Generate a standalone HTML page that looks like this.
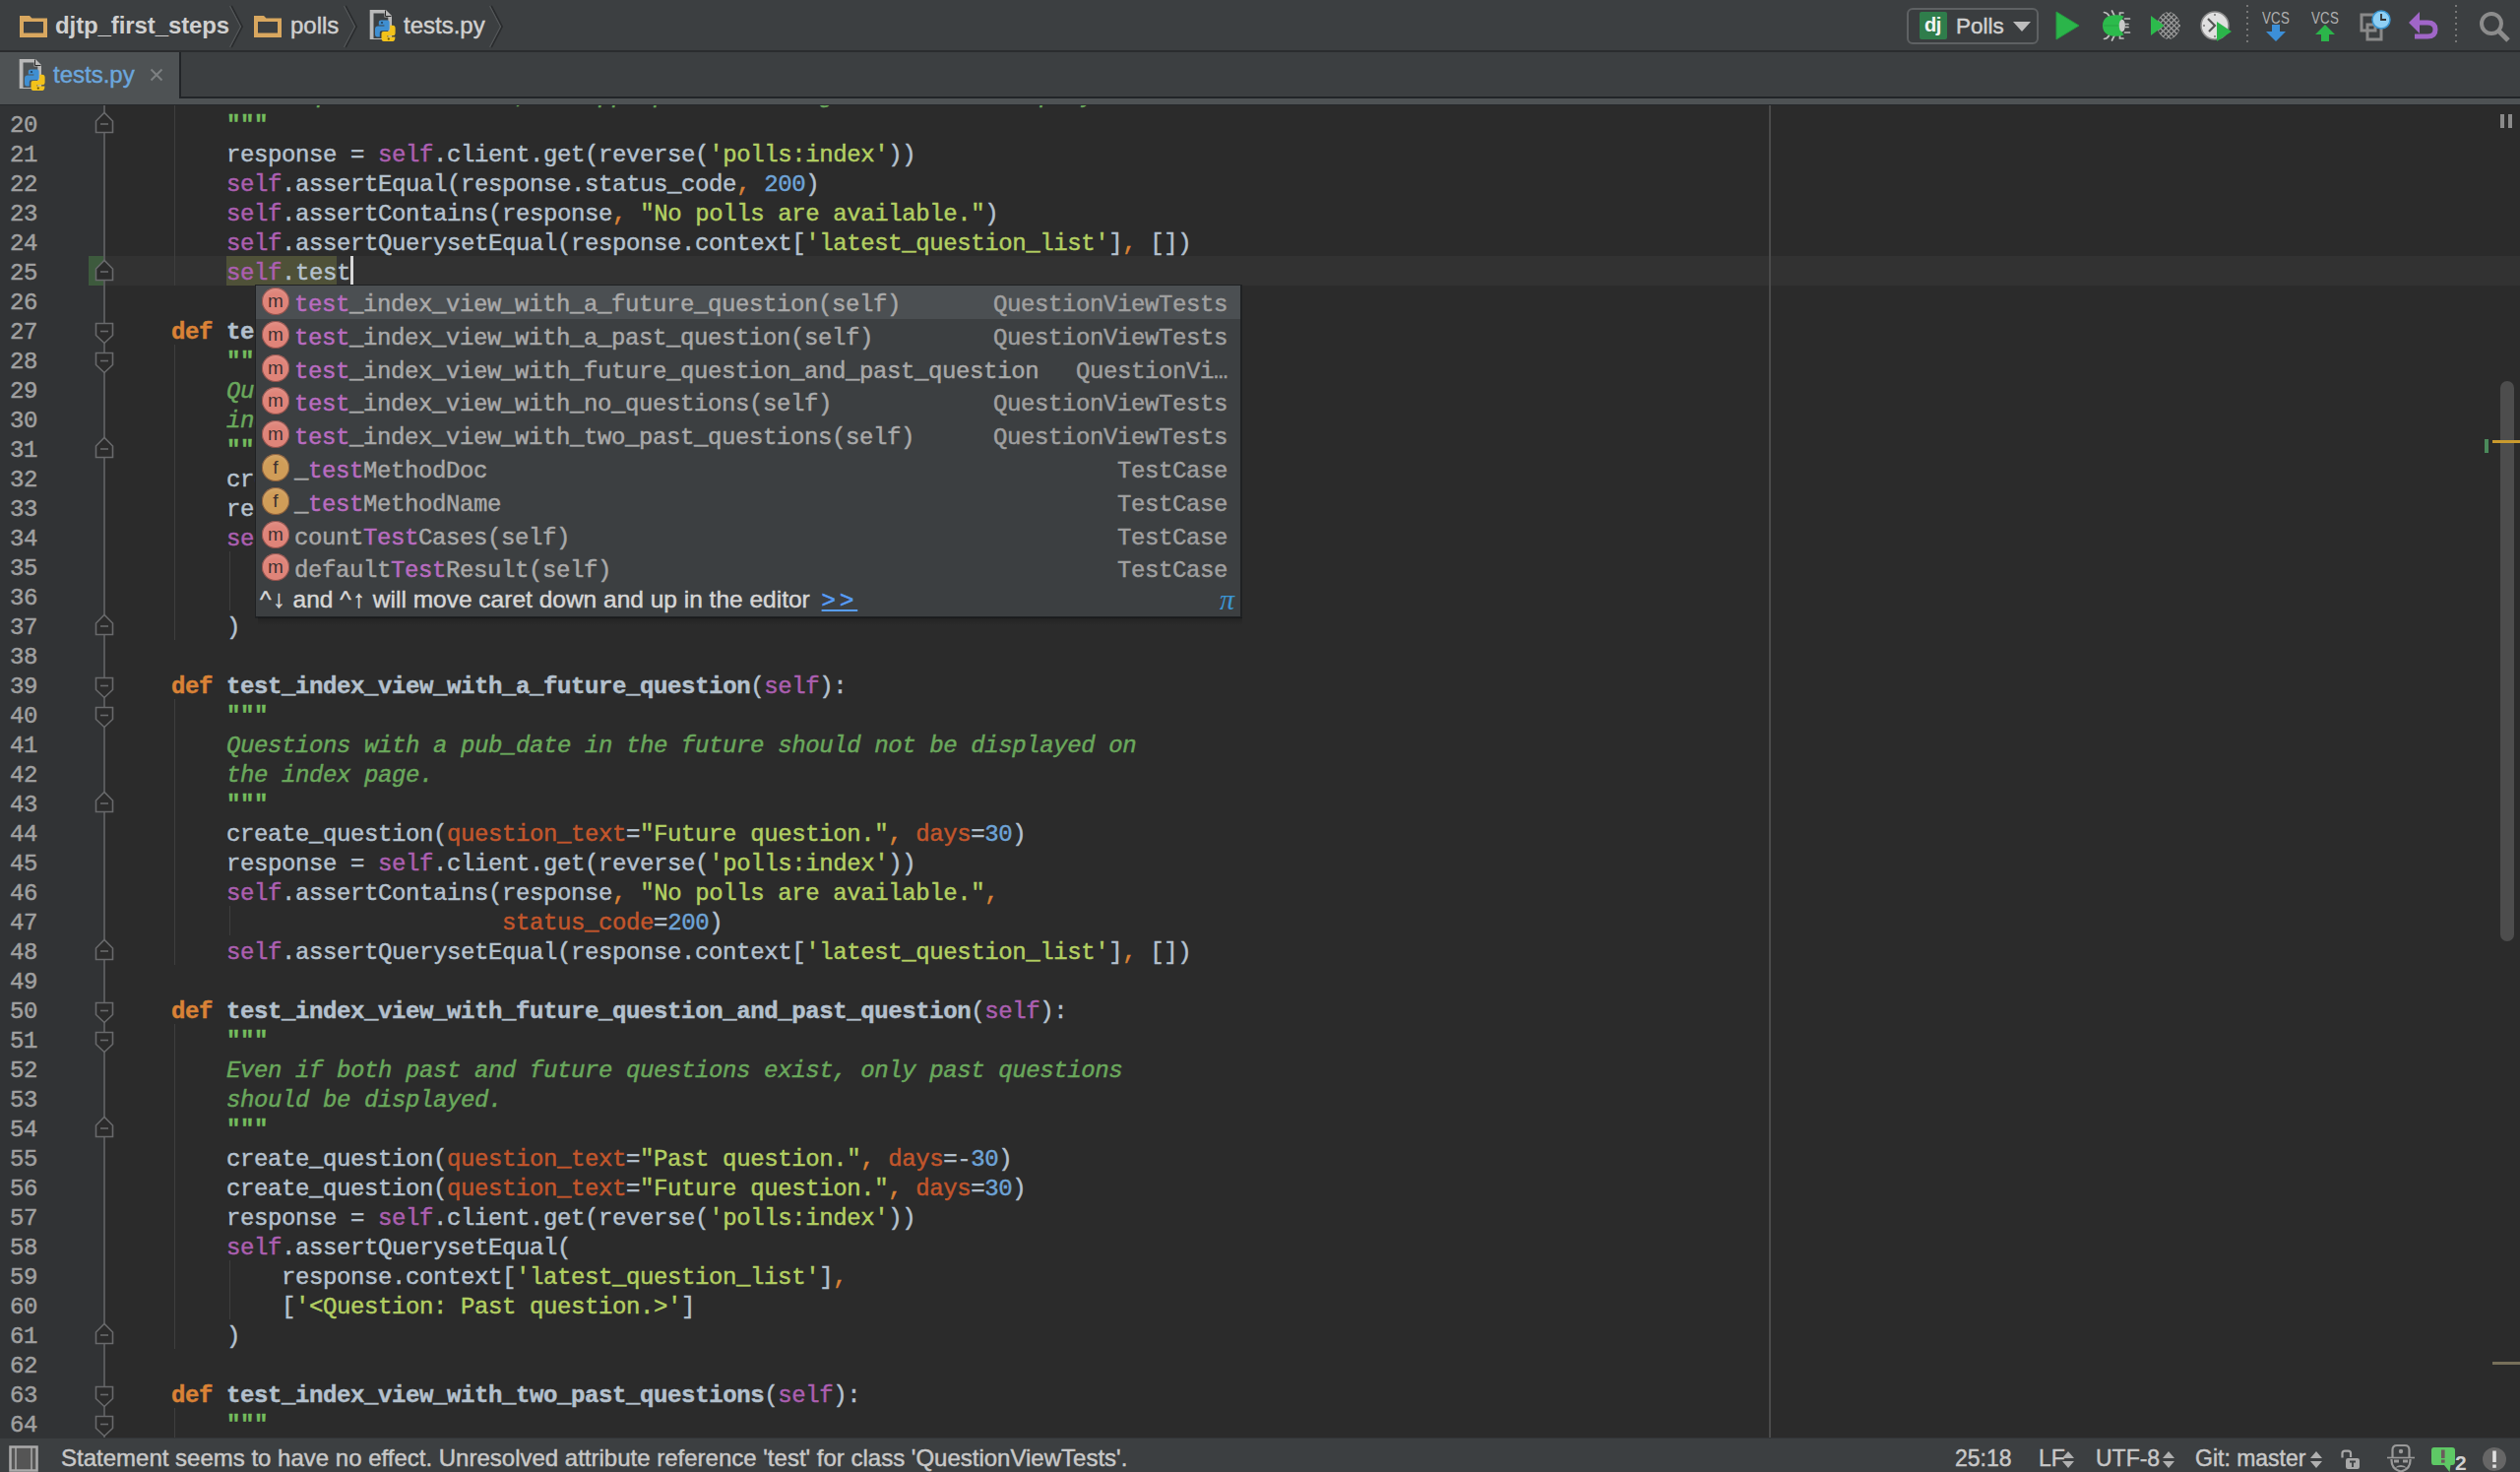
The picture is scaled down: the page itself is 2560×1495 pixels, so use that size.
<!DOCTYPE html><html><head><meta charset="utf-8"><style>
*{margin:0;padding:0;box-sizing:border-box}
html,body{width:2560px;height:1495px;overflow:hidden;background:#2b2b2b}
body{position:relative;font-family:"Liberation Sans",sans-serif}
.abs{position:absolute}
.mono{font-family:"Liberation Mono",monospace;font-size:24px;letter-spacing:-0.4px;white-space:pre}
.ln{position:absolute;left:0;height:30px;line-height:30px;padding-top:3px}
.d{color:#b5c2cf}.k{color:#d98236;font-weight:bold}.s{color:#ab5fb0}.t{color:#b3cf62}
.o{color:#6aa85c;font-style:italic}.q{color:#74bd5e;font-weight:bold}.n{color:#6ea3d6}.a{color:#c2562b}.c{color:#d98236}
.f{color:#b3c0cd;font-weight:bold}
.num{position:absolute;left:0;width:38px;text-align:right;height:30px;line-height:30px;padding-top:3px;color:#a0a0a0}
.st{-webkit-text-stroke:0.45px currentColor}
.ui{font-family:"Liberation Sans",sans-serif;white-space:pre;position:absolute}
.prow{position:absolute;left:0;width:1000px;height:34px}
.ptxt{position:absolute;left:39px;top:0;line-height:34px;padding-top:3px;color:#a9a9a9}
.ptype{position:absolute;right:13px;top:0;line-height:34px;padding-top:3px;color:#a0a0a0}
.pm{color:#b86cc0}
.pic{position:absolute;left:6px;top:2px;width:28px;height:28px;border-radius:14px;font-family:"Liberation Sans",sans-serif;font-size:19px;line-height:28px;text-align:center;color:#3d3030;box-shadow:inset 0 0 0 1px rgba(60,20,20,0.45),inset 0 3px 4px rgba(255,255,255,0.12)}
</style></head><body><div class="abs" style="left:0;top:0;width:2560px;height:51px;background:#3c3f41"></div><div class="abs" style="left:0;top:51px;width:2560px;height:2px;background:#2a2c2e"></div><svg class="abs" style="left:19px;top:13px" width="30" height="26" viewBox="0 0 30 26"><path d="M1 3 H11 L13.5 5.5 H29 V25 H1 Z" fill="#d8a75f"/><rect x="5" y="9" width="20" height="11.5" fill="#3c3f41"/></svg><div class="ui" style="left:56px;top:9px;font-size:24px;line-height:34px;color:#d0d0d0;font-weight:bold;letter-spacing:-0.1px">djtp_first_steps</div><svg class="abs" style="left:233px;top:5px" width="16" height="44" viewBox="0 0 16 44"><path d="M2 1 L13 22 L2 43" fill="none" stroke="#2a2c2e" stroke-width="2"/><path d="M0.5 1 L11.5 22 L0.5 43" fill="none" stroke="#55585a" stroke-width="1.2"/></svg><svg class="abs" style="left:257px;top:13px" width="30" height="26" viewBox="0 0 30 26"><path d="M1 3 H11 L13.5 5.5 H29 V25 H1 Z" fill="#d8a75f"/><rect x="5" y="9" width="20" height="11.5" fill="#3c3f41"/></svg><div class="ui st" style="left:295px;top:9px;font-size:24px;line-height:34px;color:#d0d0d0">polls</div><svg class="abs" style="left:349px;top:5px" width="16" height="44" viewBox="0 0 16 44"><path d="M2 1 L13 22 L2 43" fill="none" stroke="#2a2c2e" stroke-width="2"/><path d="M0.5 1 L11.5 22 L0.5 43" fill="none" stroke="#55585a" stroke-width="1.2"/></svg><svg class="abs" style="left:375px;top:9px" width="28" height="34" viewBox="0 0 28 34"><path d="M0.7 0.9 H17 L23 6.9 V31 H0.7 Z" fill="#b9b9b9"/><path d="M4.5 4.6 H15.5 V8.5 H19.3 V30 H4.5 Z" fill="#3c3f41"/><path d="M16.5 1.5 V7.5 H22.5" fill="none" stroke="#2a2a2a" stroke-width="1"/><path d="M9.8 13.2 Q9.8 11.4 12 11.4 H18.6 Q20.6 11.4 20.6 13.5 V20 Q20.6 22.2 18.5 22.2 H12.6 Q10.8 22.2 10.8 24.2 V28.4 H8.2 Q6 28.4 6 25.5 V20.8 Q6 17.6 9 17.6 H15.4 V16.4 H9.8 Z" fill="#3f8fd2"/><circle cx="13" cy="14" r="1.1" fill="#1d3f5e"/><path d="M26.4 28.6 Q26.4 33 24 33 H14.6 Q12.5 33 12.5 30.6 V25 Q12.5 23 14.6 23 H19.2 Q21.2 23 21.2 21 V16.7 H24 Q26.6 16.7 26.6 19.6 V25 Q26.6 27.2 24 27.2 H18.5 V28.6 Z" fill="#f2c21a"/><circle cx="19.8" cy="30.6" r="1.1" fill="#6a5300"/></svg><div class="ui st" style="left:410px;top:9px;font-size:24px;line-height:34px;color:#d0d0d0">tests.py</div><svg class="abs" style="left:497px;top:5px" width="16" height="44" viewBox="0 0 16 44"><path d="M2 1 L13 22 L2 43" fill="none" stroke="#2a2c2e" stroke-width="2"/><path d="M0.5 1 L11.5 22 L0.5 43" fill="none" stroke="#55585a" stroke-width="1.2"/></svg><div class="abs" style="left:1937px;top:8px;width:134px;height:37px;border:2px solid #5e6163;border-radius:6px;background:#3a3d3f"></div><div class="abs" style="left:1950px;top:12px;width:28px;height:28px;background:#2f7d4b;border-radius:2px"></div><div class="ui" style="left:1955px;top:11px;font-size:20px;line-height:28px;color:#f4f4f4;font-weight:bold;letter-spacing:-0.5px">dj</div><div class="ui st" style="left:1987px;top:10px;font-size:22.5px;line-height:34px;color:#d0d0d0">Polls</div><svg class="abs" style="left:2045px;top:22px" width="18" height="11"><path d="M0 0 H18 L9 10 Z" fill="#bdbdbd"/></svg><svg class="abs" style="left:2088px;top:11px" width="26" height="30"><path d="M1 1 L24 15 L1 29 Z" fill="#2bb54a" stroke="#259c40" stroke-width="1"/></svg><svg class="abs" style="left:2130px;top:8px" width="40" height="36" viewBox="0 0 40 36"><g stroke="#bdbdbd" stroke-width="1.7" fill="none" stroke-linecap="round"><path d="M7.5 4.5 Q11 5 12.5 8"/><path d="M15.5 3 L18 8"/><path d="M27 5 H23.5 V8.5"/><path d="M28.5 11 H33.5"/><path d="M29.5 16.5 H32"/><path d="M29.5 19.5 H32"/><path d="M28.5 25 H33.5"/><path d="M7.5 31.5 Q11 31 12.5 28"/><path d="M15.5 33 L18 28"/><path d="M27 31 H23.5 V27.5"/></g><path d="M27.5 8.5 C20 6 6 6 6 18 C6 30 20 30 27.5 27.5 C24 23 24 13 27.5 8.5 Z" fill="#2cbb4c"/><path d="M7 18 H24" stroke="#23a040" stroke-width="0.8"/><ellipse cx="25.8" cy="18" rx="3.1" ry="6.2" fill="#c9c9c9"/></svg><svg class="abs" style="left:2182px;top:8px" width="36" height="36" viewBox="0 0 36 36"><defs><clipPath id="cvc"><path d="M21 4 C26 4 33 11 33 18 C33 25 26 32 21 32 C16 32 9 25 9 18 C9 11 16 4 21 4 Z"/></clipPath></defs><g clip-path="url(#cvc)" stroke="#9a9a9a" stroke-width="1.3"><path d="M-51.8 -10.0 L8.2 50.0"/><path d="M4.2 -10.0 L-55.8 50.0"/><path d="M-46.2 -10.0 L13.8 50.0"/><path d="M9.8 -10.0 L-50.2 50.0"/><path d="M-40.6 -10.0 L19.4 50.0"/><path d="M15.4 -10.0 L-44.6 50.0"/><path d="M-35.0 -10.0 L25.0 50.0"/><path d="M21.0 -10.0 L-39.0 50.0"/><path d="M-29.4 -10.0 L30.6 50.0"/><path d="M26.6 -10.0 L-33.4 50.0"/><path d="M-23.8 -10.0 L36.2 50.0"/><path d="M32.2 -10.0 L-27.8 50.0"/><path d="M-18.2 -10.0 L41.8 50.0"/><path d="M37.8 -10.0 L-22.2 50.0"/><path d="M-12.6 -10.0 L47.4 50.0"/><path d="M43.4 -10.0 L-16.6 50.0"/><path d="M-7.0 -10.0 L53.0 50.0"/><path d="M49.0 -10.0 L-11.0 50.0"/><path d="M-1.4 -10.0 L58.6 50.0"/><path d="M54.6 -10.0 L-5.4 50.0"/><path d="M4.2 -10.0 L64.2 50.0"/><path d="M60.2 -10.0 L0.2 50.0"/><path d="M9.8 -10.0 L69.8 50.0"/><path d="M65.8 -10.0 L5.8 50.0"/><path d="M15.4 -10.0 L75.4 50.0"/><path d="M71.4 -10.0 L11.4 50.0"/><path d="M21.0 -10.0 L81.0 50.0"/><path d="M77.0 -10.0 L17.0 50.0"/><path d="M26.6 -10.0 L86.6 50.0"/><path d="M82.6 -10.0 L22.6 50.0"/><path d="M32.2 -10.0 L92.2 50.0"/><path d="M88.2 -10.0 L28.2 50.0"/><path d="M37.8 -10.0 L97.8 50.0"/><path d="M93.8 -10.0 L33.8 50.0"/></g><path d="M3 8 L16.5 18 L3 28 Z" fill="#2cbb4c"/></svg><svg class="abs" style="left:2234px;top:10px" width="36" height="34" viewBox="0 0 36 34"><circle cx="16" cy="16" r="14" fill="#e0e0e0" stroke="#8c8c8c" stroke-width="1.5"/><path d="M9 9 L16 16 L10 22" stroke="#555" stroke-width="2.2" fill="none"/><circle cx="16" cy="5" r="1" fill="#777"/><circle cx="5" cy="16" r="1" fill="#777"/><circle cx="16" cy="27" r="1" fill="#777"/><path d="M18 12 L33 22 L18 32 Z" fill="#2bb54a"/></svg><svg class="abs" style="left:2281px;top:4px" width="4" height="40"><rect x="1" y="1" width="2" height="2" fill="#777"/><rect x="1" y="7" width="2" height="2" fill="#777"/><rect x="1" y="13" width="2" height="2" fill="#777"/><rect x="1" y="19" width="2" height="2" fill="#777"/><rect x="1" y="25" width="2" height="2" fill="#777"/><rect x="1" y="31" width="2" height="2" fill="#777"/><rect x="1" y="37" width="2" height="2" fill="#777"/></svg><svg class="abs" style="left:2493px;top:4px" width="4" height="40"><rect x="1" y="1" width="2" height="2" fill="#777"/><rect x="1" y="7" width="2" height="2" fill="#777"/><rect x="1" y="13" width="2" height="2" fill="#777"/><rect x="1" y="19" width="2" height="2" fill="#777"/><rect x="1" y="25" width="2" height="2" fill="#777"/><rect x="1" y="31" width="2" height="2" fill="#777"/><rect x="1" y="37" width="2" height="2" fill="#777"/></svg><div class="ui" style="left:2298px;top:9px;font-size:17px;line-height:20px;color:#b0b0b0;letter-spacing:0.3px;transform:scaleX(0.78);transform-origin:0 0">VCS</div><svg class="abs" style="left:2301px;top:25px" width="22" height="18"><path d="M7 0 H15 V7 H21 L11 17 L1 7 H7 Z" fill="#3c8fd8"/></svg><div class="ui" style="left:2348px;top:9px;font-size:17px;line-height:20px;color:#b0b0b0;letter-spacing:0.3px;transform:scaleX(0.78);transform-origin:0 0">VCS</div><svg class="abs" style="left:2351px;top:25px" width="22" height="18"><path d="M11 0 L21 10 H15 V17 H7 V10 H1 Z" fill="#2bb54a"/></svg><svg class="abs" style="left:2396px;top:10px" width="34" height="32" viewBox="0 0 34 32"><rect x="3" y="5" width="14" height="16" fill="none" stroke="#8a8a8a" stroke-width="3"/><rect x="9" y="15" width="14" height="15" fill="none" stroke="#8a8a8a" stroke-width="3"/><circle cx="23" cy="10" r="9" fill="#8fd0f5" stroke="#3a95d0" stroke-width="1.5"/><path d="M23 4 V10 H28" stroke="#333" stroke-width="1.8" fill="none"/></svg><svg class="abs" style="left:2446px;top:11px" width="32" height="30" viewBox="0 0 32 30"><path d="M8 12 H20 C26 12 28 15 28 19 C28 23 26 26 20 26 H7" fill="none" stroke="#a066c8" stroke-width="5"/><path d="M1 12 L12 1 V23 Z" fill="#a066c8"/></svg><svg class="abs" style="left:2518px;top:11px" width="34" height="34" viewBox="0 0 34 34"><circle cx="13" cy="13" r="10" fill="none" stroke="#8c8c8c" stroke-width="4"/><path d="M20 20 L30 30" stroke="#8c8c8c" stroke-width="5"/></svg><div class="abs" style="left:0;top:53px;width:2560px;height:45px;background:#3c3f41"></div><div class="abs" style="left:0;top:98px;width:2560px;height:2px;background:#222528"></div><div class="abs" style="left:0;top:100px;width:2560px;height:6px;background:#4e5254"></div><div class="abs" style="left:0;top:106px;width:2560px;height:1px;background:#25282b"></div><div class="abs" style="left:0;top:53px;width:182px;height:47px;background:#4e5254"></div><div class="abs" style="left:182px;top:53px;width:2px;height:46px;background:#222528"></div><svg class="abs" style="left:19px;top:59px" width="28" height="34" viewBox="0 0 28 34"><path d="M0.7 0.9 H17 L23 6.9 V31 H0.7 Z" fill="#b9b9b9"/><path d="M4.5 4.6 H15.5 V8.5 H19.3 V30 H4.5 Z" fill="#4e5254"/><path d="M16.5 1.5 V7.5 H22.5" fill="none" stroke="#2a2a2a" stroke-width="1"/><path d="M9.8 13.2 Q9.8 11.4 12 11.4 H18.6 Q20.6 11.4 20.6 13.5 V20 Q20.6 22.2 18.5 22.2 H12.6 Q10.8 22.2 10.8 24.2 V28.4 H8.2 Q6 28.4 6 25.5 V20.8 Q6 17.6 9 17.6 H15.4 V16.4 H9.8 Z" fill="#3f8fd2"/><circle cx="13" cy="14" r="1.1" fill="#1d3f5e"/><path d="M26.4 28.6 Q26.4 33 24 33 H14.6 Q12.5 33 12.5 30.6 V25 Q12.5 23 14.6 23 H19.2 Q21.2 23 21.2 21 V16.7 H24 Q26.6 16.7 26.6 19.6 V25 Q26.6 27.2 24 27.2 H18.5 V28.6 Z" fill="#f2c21a"/><circle cx="19.8" cy="30.6" r="1.1" fill="#6a5300"/></svg><div class="ui st" style="left:54px;top:59px;font-size:24px;line-height:34px;color:#6ba6dd">tests.py</div><svg class="abs" style="left:152px;top:69px" width="14" height="14"><path d="M1.5 1.5 L12.5 12.5 M12.5 1.5 L1.5 12.5" stroke="#7d8082" stroke-width="2"/></svg><div class="abs" style="left:0;top:107px;width:2560px;height:1353px;background:#2b2b2b;overflow:hidden"><div class="abs" style="left:0;top:0;width:105px;height:1353px;background:#313335"></div><div class="abs" style="left:106px;top:153px;width:2454px;height:30px;background:#323232"></div><div class="abs" style="left:90px;top:153px;width:15px;height:30px;background:#3d5a3d"></div><div class="abs" style="left:230px;top:153px;width:112px;height:30px;background:#4f5138"></div><div class="abs" style="left:1797px;top:0;width:2px;height:1353px;background:#4a4a4a"></div><div class="abs" style="left:105px;top:0;width:2px;height:1353px;background:#58595b"></div><div class="abs" style="left:177px;top:-27px;width:1px;height:210px;background:#3e3e3e"></div><div class="abs" style="left:177px;top:243px;width:1px;height:300px;background:#3e3e3e"></div><div class="abs" style="left:177px;top:603px;width:1px;height:270px;background:#3e3e3e"></div><div class="abs" style="left:177px;top:933px;width:1px;height:330px;background:#3e3e3e"></div><div class="abs" style="left:177px;top:1323px;width:1px;height:60px;background:#3e3e3e"></div><div class="abs" style="left:233px;top:453px;width:1px;height:60px;background:#3e3e3e"></div><div class="abs" style="left:233px;top:813px;width:1px;height:30px;background:#3e3e3e"></div><div class="abs" style="left:233px;top:1173px;width:1px;height:60px;background:#3e3e3e"></div><div class="num mono st" style="top:-27px">19</div><div class="ln mono st" style="left:118px;top:-27px"><span class="d">        </span><span class="o">If no questions exist, an appropriate message should be displayed.</span></div><div class="num mono st" style="top:3px">20</div><div class="ln mono st" style="left:118px;top:3px"><span class="d">        </span><span class="q">&quot;&quot;&quot;</span></div><div class="num mono st" style="top:33px">21</div><div class="ln mono st" style="left:118px;top:33px"><span class="d">        response = </span><span class="s">self</span><span class="d">.client.get(reverse(</span><span class="t">&#x27;polls:index&#x27;</span><span class="d">))</span></div><div class="num mono st" style="top:63px">22</div><div class="ln mono st" style="left:118px;top:63px"><span class="d">        </span><span class="s">self</span><span class="d">.assertEqual(response.status_code</span><span class="c">, </span><span class="n">200</span><span class="d">)</span></div><div class="num mono st" style="top:93px">23</div><div class="ln mono st" style="left:118px;top:93px"><span class="d">        </span><span class="s">self</span><span class="d">.assertContains(response</span><span class="c">, </span><span class="t">&quot;No polls are available.&quot;</span><span class="d">)</span></div><div class="num mono st" style="top:123px">24</div><div class="ln mono st" style="left:118px;top:123px"><span class="d">        </span><span class="s">self</span><span class="d">.assertQuerysetEqual(response.context[</span><span class="t">&#x27;latest_question_list&#x27;</span><span class="d">]</span><span class="c">, </span><span class="d">[])</span></div><div class="num mono st" style="top:153px">25</div><div class="ln mono st" style="left:118px;top:153px"><span class="d">        </span><span class="s">self</span><span class="d">.test</span></div><div class="num mono st" style="top:183px">26</div><div class="ln mono st" style="left:118px;top:183px"></div><div class="num mono st" style="top:213px">27</div><div class="ln mono st" style="left:118px;top:213px"><span class="d">    </span><span class="k">def</span><span class="d"> </span><span class="f">test_index_view_with_a_past_question</span><span class="d">(</span><span class="s">self</span><span class="d">):</span></div><div class="num mono st" style="top:243px">28</div><div class="ln mono st" style="left:118px;top:243px"><span class="d">        </span><span class="q">&quot;&quot;&quot;</span></div><div class="num mono st" style="top:273px">29</div><div class="ln mono st" style="left:118px;top:273px"><span class="d">        </span><span class="o">Questions with a pub_date in the past should be displayed on the</span></div><div class="num mono st" style="top:303px">30</div><div class="ln mono st" style="left:118px;top:303px"><span class="d">        </span><span class="o">index page.</span></div><div class="num mono st" style="top:333px">31</div><div class="ln mono st" style="left:118px;top:333px"><span class="d">        </span><span class="q">&quot;&quot;&quot;</span></div><div class="num mono st" style="top:363px">32</div><div class="ln mono st" style="left:118px;top:363px"><span class="d">        create_question(</span><span class="a">question_text</span><span class="d">=</span><span class="t">&quot;Past question.&quot;</span><span class="c">, </span><span class="a">days</span><span class="d">=-</span><span class="n">30</span><span class="d">)</span></div><div class="num mono st" style="top:393px">33</div><div class="ln mono st" style="left:118px;top:393px"><span class="d">        response = </span><span class="s">self</span><span class="d">.client.get(reverse(</span><span class="t">&#x27;polls:index&#x27;</span><span class="d">))</span></div><div class="num mono st" style="top:423px">34</div><div class="ln mono st" style="left:118px;top:423px"><span class="d">        </span><span class="s">self</span><span class="d">.assertQuerysetEqual(</span></div><div class="num mono st" style="top:453px">35</div><div class="ln mono st" style="left:118px;top:453px"><span class="d">            response.context[</span><span class="t">&#x27;latest_question_list&#x27;</span><span class="d">]</span><span class="c">,</span></div><div class="num mono st" style="top:483px">36</div><div class="ln mono st" style="left:118px;top:483px"><span class="d">            [</span><span class="t">&#x27;&lt;Question: Past question.&gt;&#x27;</span><span class="d">]</span></div><div class="num mono st" style="top:513px">37</div><div class="ln mono st" style="left:118px;top:513px"><span class="d">        )</span></div><div class="num mono st" style="top:543px">38</div><div class="ln mono st" style="left:118px;top:543px"></div><div class="num mono st" style="top:573px">39</div><div class="ln mono st" style="left:118px;top:573px"><span class="d">    </span><span class="k">def</span><span class="d"> </span><span class="f">test_index_view_with_a_future_question</span><span class="d">(</span><span class="s">self</span><span class="d">):</span></div><div class="num mono st" style="top:603px">40</div><div class="ln mono st" style="left:118px;top:603px"><span class="d">        </span><span class="q">&quot;&quot;&quot;</span></div><div class="num mono st" style="top:633px">41</div><div class="ln mono st" style="left:118px;top:633px"><span class="d">        </span><span class="o">Questions with a pub_date in the future should not be displayed on</span></div><div class="num mono st" style="top:663px">42</div><div class="ln mono st" style="left:118px;top:663px"><span class="d">        </span><span class="o">the index page.</span></div><div class="num mono st" style="top:693px">43</div><div class="ln mono st" style="left:118px;top:693px"><span class="d">        </span><span class="q">&quot;&quot;&quot;</span></div><div class="num mono st" style="top:723px">44</div><div class="ln mono st" style="left:118px;top:723px"><span class="d">        create_question(</span><span class="a">question_text</span><span class="d">=</span><span class="t">&quot;Future question.&quot;</span><span class="c">, </span><span class="a">days</span><span class="d">=</span><span class="n">30</span><span class="d">)</span></div><div class="num mono st" style="top:753px">45</div><div class="ln mono st" style="left:118px;top:753px"><span class="d">        response = </span><span class="s">self</span><span class="d">.client.get(reverse(</span><span class="t">&#x27;polls:index&#x27;</span><span class="d">))</span></div><div class="num mono st" style="top:783px">46</div><div class="ln mono st" style="left:118px;top:783px"><span class="d">        </span><span class="s">self</span><span class="d">.assertContains(response</span><span class="c">, </span><span class="t">&quot;No polls are available.&quot;</span><span class="c">,</span></div><div class="num mono st" style="top:813px">47</div><div class="ln mono st" style="left:118px;top:813px"><span class="d">                            </span><span class="a">status_code</span><span class="d">=</span><span class="n">200</span><span class="d">)</span></div><div class="num mono st" style="top:843px">48</div><div class="ln mono st" style="left:118px;top:843px"><span class="d">        </span><span class="s">self</span><span class="d">.assertQuerysetEqual(response.context[</span><span class="t">&#x27;latest_question_list&#x27;</span><span class="d">]</span><span class="c">, </span><span class="d">[])</span></div><div class="num mono st" style="top:873px">49</div><div class="ln mono st" style="left:118px;top:873px"></div><div class="num mono st" style="top:903px">50</div><div class="ln mono st" style="left:118px;top:903px"><span class="d">    </span><span class="k">def</span><span class="d"> </span><span class="f">test_index_view_with_future_question_and_past_question</span><span class="d">(</span><span class="s">self</span><span class="d">):</span></div><div class="num mono st" style="top:933px">51</div><div class="ln mono st" style="left:118px;top:933px"><span class="d">        </span><span class="q">&quot;&quot;&quot;</span></div><div class="num mono st" style="top:963px">52</div><div class="ln mono st" style="left:118px;top:963px"><span class="d">        </span><span class="o">Even if both past and future questions exist, only past questions</span></div><div class="num mono st" style="top:993px">53</div><div class="ln mono st" style="left:118px;top:993px"><span class="d">        </span><span class="o">should be displayed.</span></div><div class="num mono st" style="top:1023px">54</div><div class="ln mono st" style="left:118px;top:1023px"><span class="d">        </span><span class="q">&quot;&quot;&quot;</span></div><div class="num mono st" style="top:1053px">55</div><div class="ln mono st" style="left:118px;top:1053px"><span class="d">        create_question(</span><span class="a">question_text</span><span class="d">=</span><span class="t">&quot;Past question.&quot;</span><span class="c">, </span><span class="a">days</span><span class="d">=-</span><span class="n">30</span><span class="d">)</span></div><div class="num mono st" style="top:1083px">56</div><div class="ln mono st" style="left:118px;top:1083px"><span class="d">        create_question(</span><span class="a">question_text</span><span class="d">=</span><span class="t">&quot;Future question.&quot;</span><span class="c">, </span><span class="a">days</span><span class="d">=</span><span class="n">30</span><span class="d">)</span></div><div class="num mono st" style="top:1113px">57</div><div class="ln mono st" style="left:118px;top:1113px"><span class="d">        response = </span><span class="s">self</span><span class="d">.client.get(reverse(</span><span class="t">&#x27;polls:index&#x27;</span><span class="d">))</span></div><div class="num mono st" style="top:1143px">58</div><div class="ln mono st" style="left:118px;top:1143px"><span class="d">        </span><span class="s">self</span><span class="d">.assertQuerysetEqual(</span></div><div class="num mono st" style="top:1173px">59</div><div class="ln mono st" style="left:118px;top:1173px"><span class="d">            response.context[</span><span class="t">&#x27;latest_question_list&#x27;</span><span class="d">]</span><span class="c">,</span></div><div class="num mono st" style="top:1203px">60</div><div class="ln mono st" style="left:118px;top:1203px"><span class="d">            [</span><span class="t">&#x27;&lt;Question: Past question.&gt;&#x27;</span><span class="d">]</span></div><div class="num mono st" style="top:1233px">61</div><div class="ln mono st" style="left:118px;top:1233px"><span class="d">        )</span></div><div class="num mono st" style="top:1263px">62</div><div class="ln mono st" style="left:118px;top:1263px"></div><div class="num mono st" style="top:1293px">63</div><div class="ln mono st" style="left:118px;top:1293px"><span class="d">    </span><span class="k">def</span><span class="d"> </span><span class="f">test_index_view_with_two_past_questions</span><span class="d">(</span><span class="s">self</span><span class="d">):</span></div><div class="num mono st" style="top:1323px">64</div><div class="ln mono st" style="left:118px;top:1323px"><span class="d">        </span><span class="q">&quot;&quot;&quot;</span></div><div class="num mono st" style="top:1353px">65</div><div class="ln mono st" style="left:118px;top:1353px"><span class="d">        </span><span class="o">Two past questions.</span></div><div class="abs" style="left:356px;top:153px;width:3px;height:30px;background:#d8d8d8"></div><svg class="abs" style="left:96px;top:220px" width="20" height="24" viewBox="0 0 20 24"><path d="M1.5 1.5 H18.5 V13.5 L10 21.5 L1.5 13.5 Z" fill="#2b2b2b" stroke="#68696b" stroke-width="1.6"/><path d="M6 9.5 H14" stroke="#68696b" stroke-width="1.6"/></svg><svg class="abs" style="left:96px;top:250px" width="20" height="24" viewBox="0 0 20 24"><path d="M1.5 1.5 H18.5 V13.5 L10 21.5 L1.5 13.5 Z" fill="#2b2b2b" stroke="#68696b" stroke-width="1.6"/><path d="M6 9.5 H14" stroke="#68696b" stroke-width="1.6"/></svg><svg class="abs" style="left:96px;top:580px" width="20" height="24" viewBox="0 0 20 24"><path d="M1.5 1.5 H18.5 V13.5 L10 21.5 L1.5 13.5 Z" fill="#2b2b2b" stroke="#68696b" stroke-width="1.6"/><path d="M6 9.5 H14" stroke="#68696b" stroke-width="1.6"/></svg><svg class="abs" style="left:96px;top:610px" width="20" height="24" viewBox="0 0 20 24"><path d="M1.5 1.5 H18.5 V13.5 L10 21.5 L1.5 13.5 Z" fill="#2b2b2b" stroke="#68696b" stroke-width="1.6"/><path d="M6 9.5 H14" stroke="#68696b" stroke-width="1.6"/></svg><svg class="abs" style="left:96px;top:910px" width="20" height="24" viewBox="0 0 20 24"><path d="M1.5 1.5 H18.5 V13.5 L10 21.5 L1.5 13.5 Z" fill="#2b2b2b" stroke="#68696b" stroke-width="1.6"/><path d="M6 9.5 H14" stroke="#68696b" stroke-width="1.6"/></svg><svg class="abs" style="left:96px;top:940px" width="20" height="24" viewBox="0 0 20 24"><path d="M1.5 1.5 H18.5 V13.5 L10 21.5 L1.5 13.5 Z" fill="#2b2b2b" stroke="#68696b" stroke-width="1.6"/><path d="M6 9.5 H14" stroke="#68696b" stroke-width="1.6"/></svg><svg class="abs" style="left:96px;top:1300px" width="20" height="24" viewBox="0 0 20 24"><path d="M1.5 1.5 H18.5 V13.5 L10 21.5 L1.5 13.5 Z" fill="#2b2b2b" stroke="#68696b" stroke-width="1.6"/><path d="M6 9.5 H14" stroke="#68696b" stroke-width="1.6"/></svg><svg class="abs" style="left:96px;top:1330px" width="20" height="24" viewBox="0 0 20 24"><path d="M1.5 1.5 H18.5 V13.5 L10 21.5 L1.5 13.5 Z" fill="#2b2b2b" stroke="#68696b" stroke-width="1.6"/><path d="M6 9.5 H14" stroke="#68696b" stroke-width="1.6"/></svg><svg class="abs" style="left:96px;top:6px" width="20" height="24" viewBox="0 0 20 24"><path d="M1.5 21.5 H18.5 V10 L10 1.5 L1.5 10 Z" fill="#2b2b2b" stroke="#68696b" stroke-width="1.6"/><path d="M6 13 H14" stroke="#68696b" stroke-width="1.6"/></svg><svg class="abs" style="left:96px;top:156px" width="20" height="24" viewBox="0 0 20 24"><path d="M1.5 21.5 H18.5 V10 L10 1.5 L1.5 10 Z" fill="#2b2b2b" stroke="#68696b" stroke-width="1.6"/><path d="M6 13 H14" stroke="#68696b" stroke-width="1.6"/></svg><svg class="abs" style="left:96px;top:336px" width="20" height="24" viewBox="0 0 20 24"><path d="M1.5 21.5 H18.5 V10 L10 1.5 L1.5 10 Z" fill="#2b2b2b" stroke="#68696b" stroke-width="1.6"/><path d="M6 13 H14" stroke="#68696b" stroke-width="1.6"/></svg><svg class="abs" style="left:96px;top:516px" width="20" height="24" viewBox="0 0 20 24"><path d="M1.5 21.5 H18.5 V10 L10 1.5 L1.5 10 Z" fill="#2b2b2b" stroke="#68696b" stroke-width="1.6"/><path d="M6 13 H14" stroke="#68696b" stroke-width="1.6"/></svg><svg class="abs" style="left:96px;top:696px" width="20" height="24" viewBox="0 0 20 24"><path d="M1.5 21.5 H18.5 V10 L10 1.5 L1.5 10 Z" fill="#2b2b2b" stroke="#68696b" stroke-width="1.6"/><path d="M6 13 H14" stroke="#68696b" stroke-width="1.6"/></svg><svg class="abs" style="left:96px;top:846px" width="20" height="24" viewBox="0 0 20 24"><path d="M1.5 21.5 H18.5 V10 L10 1.5 L1.5 10 Z" fill="#2b2b2b" stroke="#68696b" stroke-width="1.6"/><path d="M6 13 H14" stroke="#68696b" stroke-width="1.6"/></svg><svg class="abs" style="left:96px;top:1026px" width="20" height="24" viewBox="0 0 20 24"><path d="M1.5 21.5 H18.5 V10 L10 1.5 L1.5 10 Z" fill="#2b2b2b" stroke="#68696b" stroke-width="1.6"/><path d="M6 13 H14" stroke="#68696b" stroke-width="1.6"/></svg><svg class="abs" style="left:96px;top:1236px" width="20" height="24" viewBox="0 0 20 24"><path d="M1.5 21.5 H18.5 V10 L10 1.5 L1.5 10 Z" fill="#2b2b2b" stroke="#68696b" stroke-width="1.6"/><path d="M6 13 H14" stroke="#68696b" stroke-width="1.6"/></svg><div class="abs" style="left:2540px;top:280px;width:14px;height:569px;background:#4d4d4d;border-radius:7px"></div><div class="abs" style="left:2524px;top:339px;width:4px;height:14px;background:#4b8a5b"></div><div class="abs" style="left:2532px;top:340px;width:28px;height:3px;background:#c99a2e"></div><div class="abs" style="left:2532px;top:1276px;width:28px;height:3px;background:#77705a"></div><div class="abs" style="left:2540px;top:9px;width:4px;height:14px;background:#8a8a8a"></div><div class="abs" style="left:2548px;top:9px;width:4px;height:14px;background:#8a8a8a"></div></div><div class="abs" style="left:259px;top:289px;width:1003px;height:339px;background:#1f2123"></div><div class="abs" style="left:262px;top:627px;width:1000px;height:8px;background:linear-gradient(rgba(0,0,0,0.22),rgba(0,0,0,0))"></div><div class="abs" style="left:260px;top:290px;width:1000px;height:336px;background:#3c3f41;overflow:hidden"><div class="prow" style="top:0px;background:#4b4f52;"><div class="pic" style="background:#df8479">m</div><div class="ptxt mono st"><span class="pm">test</span>_index_view_with_a_future_question(self)</div><div class="ptype mono st">QuestionViewTests</div></div><div class="prow" style="top:34px;"><div class="pic" style="background:#df8479">m</div><div class="ptxt mono st"><span class="pm">test</span>_index_view_with_a_past_question(self)</div><div class="ptype mono st">QuestionViewTests</div></div><div class="prow" style="top:68px;"><div class="pic" style="background:#df8479">m</div><div class="ptxt mono st"><span class="pm">test</span>_index_view_with_future_question_and_past_question</div><div class="ptype mono st">QuestionVi…</div></div><div class="prow" style="top:101px;"><div class="pic" style="background:#df8479">m</div><div class="ptxt mono st"><span class="pm">test</span>_index_view_with_no_questions(self)</div><div class="ptype mono st">QuestionViewTests</div></div><div class="prow" style="top:135px;"><div class="pic" style="background:#df8479">m</div><div class="ptxt mono st"><span class="pm">test</span>_index_view_with_two_past_questions(self)</div><div class="ptype mono st">QuestionViewTests</div></div><div class="prow" style="top:169px;"><div class="pic" style="background:#d09d58">f</div><div class="ptxt mono st">_<span class="pm">test</span>MethodDoc</div><div class="ptype mono st">TestCase</div></div><div class="prow" style="top:203px;"><div class="pic" style="background:#d09d58">f</div><div class="ptxt mono st">_<span class="pm">test</span>MethodName</div><div class="ptype mono st">TestCase</div></div><div class="prow" style="top:237px;"><div class="pic" style="background:#df8479">m</div><div class="ptxt mono st">count<span class="pm">Test</span>Cases(self)</div><div class="ptype mono st">TestCase</div></div><div class="prow" style="top:270px;"><div class="pic" style="background:#df8479">m</div><div class="ptxt mono st">default<span class="pm">Test</span>Result(self)</div><div class="ptype mono st">TestCase</div></div><div class="ui st" style="left:4px;top:304px;font-size:24.5px;line-height:30px;color:#d6d6d6"><span style="letter-spacing:1.5px">^↓</span> and <span style="letter-spacing:1.5px">^↑</span> will move caret down and up in the editor <span style="color:#589df6;text-decoration:underline;letter-spacing:4px;margin-left:5px">&gt;&gt;</span></div><div class="ui" style="left:979px;top:304px;font-size:30px;line-height:30px;color:#3b95d3;font-family:'Liberation Serif',serif;font-style:italic">π</div></div><div class="abs" style="left:0;top:1460px;width:2560px;height:35px;background:#3c3f41;border-top:1px solid #323537"></div><svg class="abs" style="left:9px;top:1468px" width="30" height="27" viewBox="0 0 30 27"><rect x="1.5" y="1.5" width="27" height="24" fill="#555" stroke="#aaa" stroke-width="2.5"/><path d="M7 1 V26 M23 1 V26" stroke="#aaa" stroke-width="1.5"/></svg><div class="ui st" style="left:62px;top:1465px;font-size:24px;line-height:32px;color:#c8c8c8">Statement seems to have no effect. Unresolved attribute reference 'test' for class 'QuestionViewTests'.</div><div class="ui st" style="left:1986px;top:1465px;font-size:23px;line-height:32px;color:#c8c8c8">25:18</div><div class="ui st" style="left:2071px;top:1465px;font-size:23px;line-height:32px;color:#c8c8c8">LF</div><div class="ui st" style="left:2129px;top:1465px;font-size:23px;line-height:32px;color:#c8c8c8">UTF-8</div><div class="ui st" style="left:2230px;top:1465px;font-size:23px;line-height:32px;color:#c8c8c8">Git: master</div><svg class="abs" style="left:2095px;top:1474px" width="12" height="18"><path d="M6 0 L12 7 H0 Z M0 10 H12 L6 17 Z" fill="#b0b0b0"/></svg><svg class="abs" style="left:2197px;top:1474px" width="12" height="18"><path d="M6 0 L12 7 H0 Z M0 10 H12 L6 17 Z" fill="#b0b0b0"/></svg><svg class="abs" style="left:2347px;top:1474px" width="12" height="18"><path d="M6 0 L12 7 H0 Z M0 10 H12 L6 17 Z" fill="#b0b0b0"/></svg><svg class="abs" style="left:2376px;top:1470px" width="24" height="25" viewBox="0 0 24 25"><path d="M3.5 10.5 V6 Q3.5 3.6 6 3.6 H9.5 Q12 3.6 12 6 V10" fill="none" stroke="#a8a8a8" stroke-width="2.2"/><rect x="7" y="11" width="14" height="11" rx="2.2" fill="#a8a8a8"/><path d="M11 14.5 H17 M14 14.5 V20" stroke="#3c3f41" stroke-width="1.8"/></svg><svg class="abs" style="left:2424px;top:1466px" width="30" height="29" viewBox="0 0 30 29"><path d="M6.5 14 V6.5 Q6.5 2 11 2 H19 Q23.5 2 23.5 6.5 V14" fill="none" stroke="#9a9a9a" stroke-width="2.2"/><path d="M1 14.5 H29" stroke="#9a9a9a" stroke-width="1.6"/><circle cx="15" cy="8" r="2.2" fill="#9a9a9a"/><path d="M5.5 16 Q5 26 15 28.5 Q25 26 24.5 16" fill="none" stroke="#9a9a9a" stroke-width="2.2"/><rect x="8" y="16.5" width="5" height="3" fill="#9a9a9a"/><rect x="17" y="16.5" width="5" height="3" fill="#9a9a9a"/><path d="M8.5 25 Q15 19 21.5 25 Q15 23 8.5 25 Z" fill="#9a9a9a"/></svg><svg class="abs" style="left:2469px;top:1469px" width="26" height="26" viewBox="0 0 26 26"><path d="M3.5 1 H22 Q25 1 25 4 V15.5 Q25 19 22 19 H20.5 L19.5 26 L14 19 H3.5 Q1 19 1 15.5 V4 Q1 1 3.5 1 Z" fill="#5ec865"/><rect x="11" y="3.5" width="3.6" height="8.5" fill="#6b5b5b"/><rect x="11" y="13.5" width="3.6" height="3.2" fill="#6b5b5b"/></svg><div class="ui" style="left:2494px;top:1474px;font-size:21px;line-height:24px;color:#d0d0d0;font-weight:bold">2</div><svg class="abs" style="left:2521px;top:1469px" width="27" height="26" viewBox="0 0 27 26"><circle cx="13" cy="13" r="12" fill="#666"/><rect x="11.2" y="4.5" width="3.6" height="11.5" fill="#e0e0e0"/><rect x="11.2" y="18.5" width="3.6" height="3.3" fill="#e0e0e0"/></svg></body></html>
